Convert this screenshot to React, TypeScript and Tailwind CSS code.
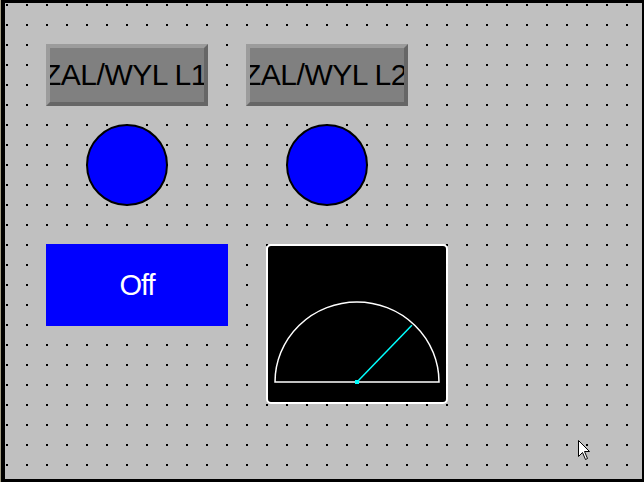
import React from 'react';

// Bevelled push button as drawn by the panel editor
const PanelButton: React.FC<{ label: string }> = ({ label }) => (
  <div className="w-[162px] h-[62px] border-[4px] border-t-[#9c9c9c] border-l-[#9c9c9c] border-r-[#666666] border-b-[#666666] bg-[#808080] flex items-center justify-end overflow-hidden">
    <span className="whitespace-nowrap text-black text-[30px] leading-none font-['Liberation_Sans',Arial,sans-serif] tracking-[-0.5px] -mr-[3px]">
      {label}
    </span>
  </div>
);

const Lamp: React.FC = () => (
  <div className="w-[162px] flex justify-center">
    <div className="w-[82px] h-[82px] rounded-full bg-[#0000ff] border-2 border-black" />
  </div>
);

const Gauge: React.FC<{ angle: number }> = ({ angle }) => {
  const cx = 89;
  const cy = 136;
  const rad = (angle * Math.PI) / 180;
  const nx = cx + Math.cos(rad) * 79;
  const ny = cy - Math.sin(rad) * 79;
  return (
    <div className="w-[182px] h-[160px] bg-black border-2 border-white rounded-[5px] overflow-hidden">
      <svg width="178" height="156" viewBox="0 0 178 156">
        <path d={`M ${cx - 82} ${cy} A 82 80 0 0 1 ${cx + 82} ${cy} Z`} fill="none" stroke="#ffffff" strokeWidth="1.5" />
        <line x1={cx} y1={cy} x2={nx} y2={ny} stroke="#00ffff" strokeWidth="1.5" />
        <rect x={cx - 2} y={cy - 2} width="4" height="4" fill="#00ffff" />
      </svg>
    </div>
  );
};

const App: React.FC = () => {
  return (
    <div className="w-[644px] h-[482px] border-l border-[#a39d84] bg-black">
      <div className="relative w-[643px] h-[482px] border-t-[3px] border-l-[4px] border-r-[2px] border-b-[3px] border-black bg-[#c0c0c0] overflow-hidden">
        {/* editor snap grid */}
        <svg className="absolute inset-0" width="637" height="476">
          <defs>
            <pattern id="grid" x="1" y="1" width="20" height="20" patternUnits="userSpaceOnUse">
              <rect x="0" y="0" width="2" height="2" fill="#000000" />
            </pattern>
          </defs>
          <rect width="637" height="476" fill="url(#grid)" />
        </svg>

        <div className="relative flex flex-col pl-[41px] pt-[41px]">
          <div className="flex gap-[38px]">
            <PanelButton label="ZAL/WYL L1" />
            <PanelButton label="ZAL/WYL L2" />
          </div>
          <div className="flex gap-[38px] mt-[18px]">
            <Lamp />
            <Lamp />
          </div>
          <div className="flex gap-[38px] mt-[38px] items-start">
            <div className="w-[182px] h-[82px] bg-[#0000ff] flex items-center justify-center">
              <span className="text-white text-[29px] leading-none font-['Liberation_Sans',Arial,sans-serif] tracking-[-1px]">Off</span>
            </div>
            <Gauge angle={46} />
          </div>
        </div>

        {/* mouse pointer */}
        <svg className="absolute left-[573px] top-[437px]" width="13" height="21" viewBox="0 0 13 21">
          <path d="M0.5 0.5 L0.5 16.5 L4.5 12.5 L7.5 19.5 L9.5 18.5 L6.5 11.5 L11.5 11.5 Z" fill="#ffffff" stroke="#000000" strokeWidth="1" />
        </svg>
      </div>
    </div>
  );
};

export default App;
